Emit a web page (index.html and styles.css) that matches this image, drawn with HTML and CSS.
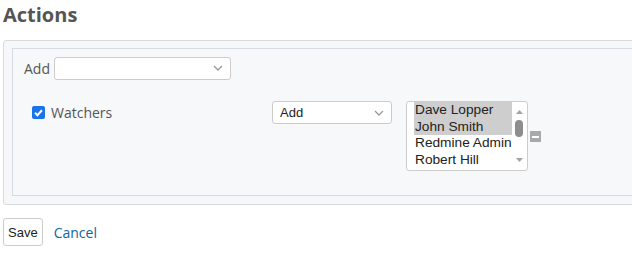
FILE: index.html
```html
<!DOCTYPE html>
<html>
<head>
<meta charset="utf-8">
<link rel="stylesheet" href="styles.css">
</head>
<body>
<h3 class="title">Actions</h3>
<div class="outer">
  <div class="inner">
    <div class="add-row">
      <label class="lbl">Add</label>
      <div class="sel sel-wide"><span class="sel-text"></span><svg class="chev" width="10" height="6" viewBox="0 0 10 6"><path d="M1 1 L5 5 L9 1" fill="none" stroke="#999" stroke-width="1.3"/></svg></div>
    </div>
    <div class="field-row">
      <div class="field-label">
        <span class="cb"><svg width="13" height="13" viewBox="0 0 13 13"><rect x="0" y="0" width="13" height="13" rx="2" fill="#1a73e8"/><path d="M3 6.8 L5.4 9.2 L10 4.2" fill="none" stroke="#fff" stroke-width="2"/></svg></span>
        <span class="lbl">Watchers</span>
      </div>
      <div class="sel sel-op"><span class="sel-text">Add</span><svg class="chev" width="10" height="6" viewBox="0 0 10 6"><path d="M1 1 L5 5 L9 1" fill="none" stroke="#999" stroke-width="1.3"/></svg></div>
      <div class="list">
        <div class="opts">
          <div class="opt selected">Dave Lopper</div>
          <div class="opt selected">John Smith</div>
          <div class="opt">Redmine Admin</div>
          <div class="opt">Robert Hill</div>
        </div>
        <div class="sbar">
          <svg width="15" height="68" viewBox="0 0 15 68">
            <path d="M4 12 L11 12 L7.5 8 Z" fill="#a3a3a3"/>
            <rect x="3" y="18" width="8" height="17" rx="4" fill="#8d8d8d"/>
            <path d="M4 56 L11 56 L7.5 60 Z" fill="#a3a3a3"/>
          </svg>
        </div>
      </div>
      <span class="minus"></span>
    </div>
  </div>
</div>
<div class="buttons">
  <button class="btn">Save</button>
  <a class="link" href="#">Cancel</a>
</div>
</body>
</html>
```
FILE: styles.css
```css
html, body { margin: 0; padding: 0; background: #fff; }
body {
  padding: 0 0 0 3px;
  font-family: "Open Sans", "Noto Sans", sans-serif;
  font-size: 13px;
  color: #555;
  overflow: hidden;
}
.title {
  margin: 0;
  padding-top: 1px;
  height: 39px;
  font-size: 20px;
  font-weight: 700;
  color: #555;
  line-height: 28px;
}
.outer {
  width: 660px;
  border: 1px solid #d6dbe1;
  border-radius: 3px;
  background: #f6f7f9;
  padding: 7px 0 8px 8px;
}
.inner {
  border: 1px solid #d6dbe1;
  background: #f7f8fa;
  height: 148px;
  padding: 8px 0 0 11px;
  box-sizing: border-box;
}
.add-row {
  display: flex;
  align-items: center;
  gap: 4px;
  height: 22px;
}
.lbl { color: #555; font-size: 14px; }
.sel {
  display: flex;
  align-items: center;
  justify-content: space-between;
  box-sizing: border-box;
  height: 23px;
  border: 1px solid #ccc;
  border-radius: 3px;
  background: #fff;
  padding: 0 7px 0 7px;
  font-family: "Liberation Sans", Arial, sans-serif;
  font-size: 13px;
  color: #222;
}
.sel-wide { width: 177px; }
.sel-op { width: 120px; }
.field-row {
  display: flex;
  align-items: flex-start;
  margin-top: 22px;
  padding-left: 8px;
}
.field-label {
  width: 240px;
  display: flex;
  align-items: center;
  gap: 6px;
  padding-top: 2px;
}
.cb { display: flex; }
.list {
  margin-left: 14px;
  width: 122px;
  height: 70px;
  box-sizing: border-box;
  border: 1px solid #ccc;
  border-radius: 3px;
  background: #fff;
  display: flex;
  padding: 0 0 0 7px;
  overflow: hidden;
}
.opts {
  flex: 1;
  font-family: "Liberation Sans", Arial, sans-serif;
  font-size: 13.7px;
  color: #222;
  overflow: hidden;
}
.opt {
  height: 16.6px;
  line-height: 16px;
  padding-left: 1px;
  white-space: nowrap;
}
.opt.selected { background: #cecece; }
.sbar { width: 15px; flex: none; }
.sbar svg { display: block; }
.minus {
  width: 11px;
  height: 11px;
  background: #a9a9a9;
  margin: 30px 0 0 2px;
  position: relative;
}
.minus::after {
  content: "";
  position: absolute;
  left: 2px;
  right: 2px;
  top: 4.5px;
  height: 2px;
  background: #fff;
}
.buttons {
  display: flex;
  align-items: center;
  gap: 11px;
  margin-top: 13px;
}
.btn {
  height: 28px;
  padding: 0 4px;
  border: 1px solid #ccc;
  border-radius: 3px;
  background: #fff;
  font-family: "Liberation Sans", Arial, sans-serif;
  font-size: 13px;
  color: #222;
}
.link {
  color: #169;
  text-decoration: none;
  font-size: 14px;
}
```
